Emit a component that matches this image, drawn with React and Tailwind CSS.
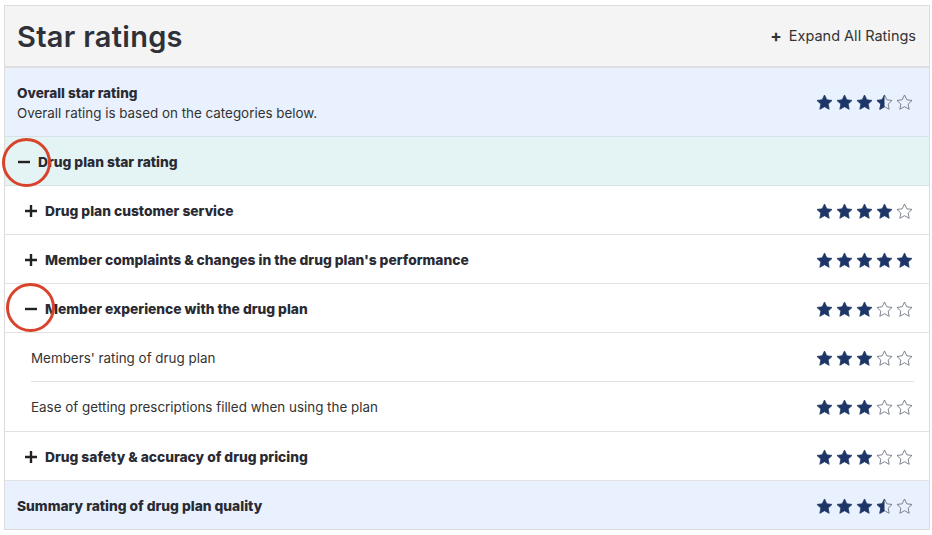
import React from 'react';

const STAR = 'M12 2.5l2.9 6.1 6.6.8-4.9 4.6 1.3 6.6L12 17.3l-5.9 3.3 1.3-6.6-4.9-4.6 6.6-.8z';

function Star({ type }) {
  return (
    <svg viewBox="0 0 24 24" className="w-[19px] h-[19px]">
      {type === 'full' && <path d={STAR} fill="#1d3667" stroke="#1d3667" strokeWidth="1" strokeLinejoin="round" />}
      {type === 'empty' && <path d={STAR} fill="none" stroke="#6b7280" strokeWidth="1.1" strokeLinejoin="round" />}
      {type === 'half' && (
        <>
          <clipPath id="half-clip">
            <rect x="0" y="0" width="12" height="24" />
          </clipPath>
          <path d={STAR} fill="none" stroke="#6b7280" strokeWidth="1.1" strokeLinejoin="round" />
          <path d={STAR} fill="#1d3667" stroke="#1d3667" strokeWidth="1" clipPath="url(#half-clip)" />
        </>
      )}
    </svg>
  );
}

function Stars({ value }) {
  const items = [];
  for (let i = 1; i <= 5; i++) {
    if (value >= i) items.push('full');
    else if (value >= i - 0.5) items.push('half');
    else items.push('empty');
  }
  return (
    <div className="flex items-center gap-[1px]">
      {items.map((t, i) => (
        <Star key={i} type={t} />
      ))}
    </div>
  );
}

function Plus() {
  return (
    <svg viewBox="0 0 14 14" className="w-[14px] h-[14px] shrink-0">
      <path d="M7 1v12M1 7h12" stroke="#222" strokeWidth="2.4" />
    </svg>
  );
}

function Minus() {
  return (
    <svg viewBox="0 0 14 14" className="w-[14px] h-[14px] shrink-0">
      <path d="M1 7h12" stroke="#222" strokeWidth="2.4" />
    </svg>
  );
}

const rows = [
  { label: 'Drug plan customer service', value: 4, icon: 'plus' },
  { label: "Member complaints & changes in the drug plan's performance", value: 5, icon: 'plus' },
  { label: 'Member experience with the drug plan', value: 3, icon: 'minus', circle: true },
];

const subRows = [
  { label: "Members' rating of drug plan", value: 3 },
  { label: 'Ease of getting prescriptions filled when using the plan', value: 3 },
];

export default function App() {
  return (
    <div className="w-[932px] h-[535px] bg-white pt-[5px] pl-[4px] pr-[2px]" style={{ fontFamily: 'Inter, "Noto Sans", sans-serif' }}>
      <div className="border border-[#dcdcdc] text-[#2a2a33]">
        {/* Header */}
        <div className="h-[62px] bg-[#f4f4f4] border-b-2 border-[#dedede] flex items-center justify-between pl-[12px] pr-[13px]">
          <h1 className="text-[29px] font-semibold tracking-[0.3px] text-[#2f3138] pt-[1px]">Star ratings</h1>
          <button className="flex items-center gap-[7px] text-[14.5px] text-[#333]">
            <span className="text-[17px] font-bold leading-none">+</span>
            Expand All Ratings
          </button>
        </div>

        {/* Overall */}
        <div className="h-[69px] bg-[#e8f1fd] border-b border-[#d9e2ec] flex items-center justify-between pl-[12px] pr-[15px]">
          <div className="pt-[1px]">
            <div className="text-[13.6px] font-extrabold leading-[20px]">Overall star rating</div>
            <div className="text-[13.4px] leading-[20px] text-[#333]">Overall rating is based on the categories below.</div>
          </div>
          <Stars value={3.5} />
        </div>

        {/* Drug plan star rating */}
        <div className="relative h-[49px] bg-[#e4f3f3] border-b border-[#d7e3e3] flex items-center pl-[12px] gap-[7px] pt-[2px]">
          <Minus />
          <span className="text-[13.8px] font-extrabold">Drug plan star rating</span>
          <div className="absolute left-[-3px] top-[1px] w-[49px] h-[49px] rounded-full border-[3px] border-[#d8432c]" />
        </div>

        {rows.map((r) => (
          <div key={r.label} className="relative h-[49px] border-b border-[#e2e2e2] flex items-center justify-between pl-[19px] pr-[15px] pt-[2px]">
            <div className="flex items-center gap-[7px]">
              {r.icon === 'plus' ? <Plus /> : <Minus />}
              <span className="text-[13.8px] font-extrabold">{r.label}</span>
            </div>
            <Stars value={r.value} />
            {r.circle && (
              <div className="absolute left-[1px] top-[-1px] w-[49px] h-[49px] rounded-full border-[3px] border-[#d8432c]" />
            )}
          </div>
        ))}

        {/* Sub rows */}
        <div className="border-b border-[#e2e2e2] pl-[26px] pr-[15px]">
          {subRows.map((s, i) => (
            <div
              key={s.label}
              className={`h-[49px] flex items-center justify-between pt-[2px] ${i === 0 ? 'border-b border-[#e2e2e2]' : ''}`}
            >
              <span className="text-[13.4px] text-[#333]">{s.label}</span>
              <Stars value={s.value} />
            </div>
          ))}
        </div>

        <div className="h-[49px] border-b border-[#e2e2e2] flex items-center justify-between pl-[19px] pr-[15px] pt-[2px]">
          <div className="flex items-center gap-[7px]">
            <Plus />
            <span className="text-[13.8px] font-extrabold">Drug safety &amp; accuracy of drug pricing</span>
          </div>
          <Stars value={3} />
        </div>

        {/* Summary */}
        <div className="h-[48px] bg-[#e8f1fd] flex items-center justify-between pl-[12px] pr-[15px] pt-[2px]">
          <span className="text-[13.8px] font-extrabold">Summary rating of drug plan quality</span>
          <Stars value={3.5} />
        </div>
      </div>
    </div>
  );
}
